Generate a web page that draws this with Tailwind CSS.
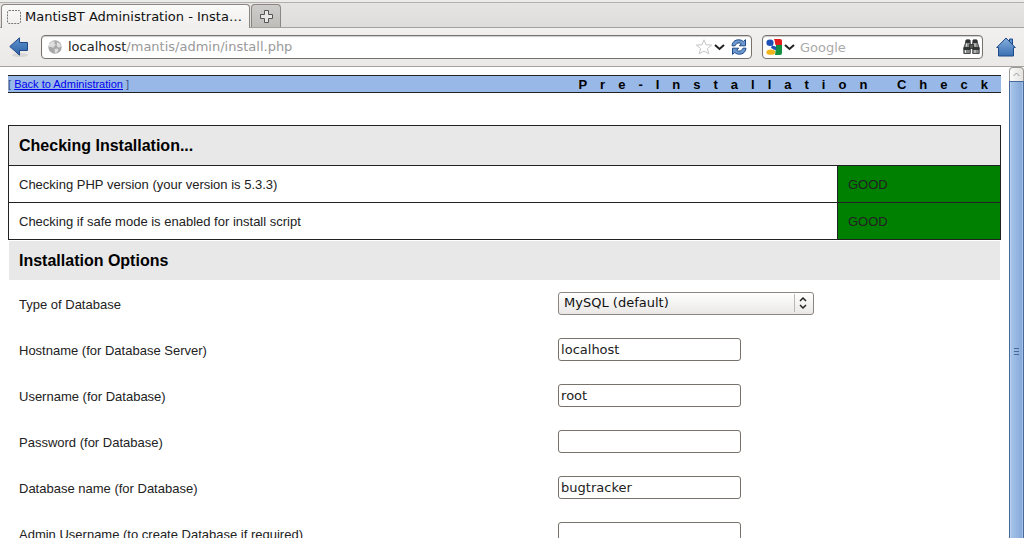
<!DOCTYPE html>
<html lang="en">
<head>
  <meta charset="UTF-8" />
  <meta name="viewport" content="width=device-width, initial-scale=1.0" />
  <title>MantisBT Administration - Installation</title>
  <script src="https://cdn.jsdelivr.net/npm/@tailwindcss/browser@4"></script>
</head>
<body class="flex h-screen flex-col overflow-hidden bg-white font-['DejaVu_Sans',sans-serif] text-[13px] text-[#222]">

  <!-- Tabs -->
  <div class="flex h-7 shrink-0 items-end gap-px border-b border-[#a5a19c] bg-linear-to-b from-[#e6e5e3] to-[#dedddb] pl-px shadow-[inset_0_2px_0_#ebebea,inset_0_3px_0_#b3b0ac]">
    <div class="relative -mb-px flex h-6 w-[249px] items-center gap-1 rounded-t border border-b-0 border-[#8b8681] bg-linear-to-b from-[#fafaf9] to-[#efeeed] pl-[5px] text-[#111]">
      <svg class="h-[14px] w-[14px]" viewBox="0 0 14 14" fill="none" stroke="#777" stroke-dasharray="2 1">
        <rect x=".5" y=".5" width="13" height="13" rx="1.5" />
      </svg>
      <span class="whitespace-nowrap">MantisBT Administration - Insta…</span>
    </div>
    <button class="flex h-[23px] w-[30px] items-center justify-center rounded-t border border-b-0 border-[#8b8681] bg-linear-to-b from-[#cfcdcb] to-[#bfbdba]" aria-label="New tab">
      <svg class="h-[13px] w-[13px]" viewBox="0 0 13 13" fill="#e7e6e4" stroke="#555">
        <path d="M4.5.5h4v4h4v4h-4v4h-4v-4h-4v-4h4z" />
      </svg>
    </button>
  </div>

  <!-- Toolbar -->
  <div class="flex h-[39px] shrink-0 items-center gap-[10px] border-b border-[#a5a19c] bg-linear-to-b from-[#f1f0ef] to-[#eae9e7] pr-2 pl-[9px]">
    <button class="mr-[2px]" aria-label="Back">
      <svg class="h-5 w-5" viewBox="0 0 20 20">
        <defs>
          <linearGradient id="blue" x1="0" y1="0" x2="0" y2="1"><stop offset="0" stop-color="#5f94d0" /><stop offset="1" stop-color="#2d62a5" /></linearGradient>
          <linearGradient id="roof" x1="0" y1="0" x2="0" y2="1"><stop offset="0" stop-color="#86aedd" /><stop offset="1" stop-color="#3a70b3" /></linearGradient>
        </defs>
        <ellipse cx="11" cy="18" rx="8" ry="2" fill="#d8d7d5" />
        <path d="M.8 9.5 10.5.8v4.700h8v8h-8v4.700z" fill="url(#blue)" stroke="#204a87" stroke-linejoin="round" />
      </svg>
    </button>
    <div class="flex h-6 flex-1 items-center rounded border border-[#77726c] bg-white pr-1 pl-[6px] shadow-[inset_0_1px_1px_#ccc]">
      <svg class="mr-[6px] h-[14px] w-[14px] shrink-0" viewBox="0 0 14 14">
        <circle cx="7" cy="7" r="6.700" fill="#a8a8a8" />
        <path d="M1 4 4 1.300l3 .5-.7 1.700L8 5 6 6.200 5.500 8 3 6.700 1 7zM9 2l3.300 1.700.6 3-2.300 1-2-2zM6.500 9l3-.5 1 1.500-1.500 2.600-2 .7z" fill="#dedede" />
      </svg>
      <div class="relative h-full flex-1">
        <input class="h-full w-full bg-transparent outline-none" aria-label="Address" value="" />
        <span class="pointer-events-none absolute inset-y-0 left-0 flex items-center text-[#999]"><span class="text-[#222]">localhost</span>/mantis/admin/install.php</span>
      </div>
      <button aria-label="Bookmark">
        <svg class="h-4 w-[18px]" viewBox="0 0 18 16" fill="#fff" stroke="#c4c4c4" stroke-linejoin="round">
          <path d="m9 .8 2.100 5 5.500.3-4.200 3.500 1.400 5.200L9 12l-4.800 2.800 1.400-5.200L1.400 6.100l5.500-.3z" />
        </svg>
      </button>
      <button class="ml-px" aria-label="History">
        <svg class="h-[7px] w-[11px]" viewBox="0 0 11 7" fill="none" stroke="#222" stroke-width="2"><path d="m1 1 4.500 4L10 1" /></svg>
      </button>
      <button class="ml-[6px]" aria-label="Reload">
        <svg class="h-4 w-4" viewBox="0 0 16 16" stroke="#204a87" stroke-linejoin="round" fill="#6c99cf">
          <path d="M1 6.800C1.300 3 4 .8 7.500.8c2 0 3.600.6 4.800 1.700L14.500.6v6.200H8.300l2-2C8.500 3.400 5.700 3.400 4 6.800z" />
          <path d="M15 9.200c-.3 3.800-3 6-6.500 6-2 0-3.600-.6-4.800-1.700l-2.200 1.900V9.200h6.200l-2 2c1.800 1.400 4.600 1.400 6.300-2z" />
        </svg>
      </button>
    </div>
    <div class="flex h-6 w-[221px] items-center rounded border border-[#77726c] bg-white pr-[2px] pl-[3px] shadow-[inset_0_1px_1px_#ccc]">
      <button class="flex items-center gap-[2px]" aria-label="Search engine">
        <svg class="h-4 w-4" viewBox="0 0 16 16">
          <path d="M8 0h6q2 0 2 2v4H9z" fill="#e31b1b" />
          <path d="M10 6h6v8q0 2-2 2H9z" fill="#129140" />
          <path d="M0 2q0-2 2-2h6l1.500 6-.5 10H2q-2 0-2-2z" fill="#fff" />
          <ellipse cx="4" cy="3.800" rx="3.600" ry="3.300" fill="#1d4fb5" />
          <path d="m6 6 4 2.500V11L5 9z" fill="#1d4fb5" />
          <ellipse cx="8.500" cy="9" rx="2" ry="1.800" fill="#1d4fb5" />
          <ellipse cx="4.800" cy="13.200" rx="4.400" ry="2.600" fill="#f3b51c" />
        </svg>
        <svg class="h-[7px] w-[11px]" viewBox="0 0 11 7" fill="none" stroke="#222" stroke-width="2"><path d="m1 1 4.500 4L10 1" /></svg>
      </button>
      <input class="ml-[5px] h-full min-w-0 flex-1 bg-transparent outline-none placeholder:text-[#aaa]" placeholder="Google" aria-label="Search" />
      <button aria-label="Find">
        <svg class="h-4 w-[17px]" viewBox="0 0 17 16" stroke="#2b2d2e" stroke-width=".8" fill="#888a85">
          <path d="M3.500 1h3l.8 3v10.500H.8V9zM13.500 1h-3l-.8 3v10.500h6.500V9z" />
          <path d="M6.500 5.500h4v4h-4z" fill="#555753" />
          <path d="M3 1h4v2.500H2.800zM10 1h4l.2 2.500H10zM1 8.500h6v2H1zM10 8.500h6v2h-6z" fill="#2e3436" />
          <path d="M2.500 11v3M3.500 4.500v3M12 11v3M12 4.500v3" stroke="#ddd" stroke-width="1" />
        </svg>
      </button>
    </div>
    <button class="ml-[3px]" aria-label="Home">
      <svg class="h-5 w-5" viewBox="0 0 20 20" stroke="#204a87" stroke-linejoin="round">
        <path d="M13.500 2h3v7h-3z" fill="#5f94d0" />
        <path d="M10 1 .7 10.500h1.800V19h15v-8.500h1.800z" fill="url(#roof)" />
      </svg>
    </button>
  </div>

  <div class="flex min-h-0 flex-1">
    <main class="flex-1 overflow-hidden p-2 font-['Liberation_Sans',sans-serif]">
      <div class="flex h-[18px] items-center justify-between border-y border-[#222] bg-[#98b8e8]">
        <span class="text-[11px] text-[#33508a]">[ <a class="text-[#00e] underline" href="#">Back to Administration</a> ]</span>
        <span class="pt-px text-[13px] leading-4 font-bold tracking-[1em] text-black">Pre-Installation Check</span>
      </div>

      <table class="mt-8 w-full border-collapse border border-[#222]">
        <thead>
          <tr class="h-10 bg-[#e8e8e8]">
            <th colspan="2" class="px-[10px] text-left text-base font-bold text-black">Checking Installation...</th>
          </tr>
        </thead>
        <tbody>
          <tr class="h-[37px] border-t border-[#222]">
            <td class="px-[10px] pt-[2px]">Checking PHP version (your version is 5.3.3)</td>
            <td class="w-[163px] border-l border-[#222] bg-[#008000] px-[10px] pt-[2px]">GOOD</td>
          </tr>
          <tr class="h-[37px] border-t border-[#222]">
            <td class="px-[10px] pt-[2px]">Checking if safe mode is enabled for install script</td>
            <td class="border-l border-[#222] bg-[#008000] px-[10px] pt-[2px]">GOOD</td>
          </tr>
        </tbody>
      </table>

      <form class="mx-px mt-px">
        <h2 class="flex h-[39px] items-center bg-[#e8e8e8] px-[10px] text-base font-bold text-black">Installation Options</h2>
        <div class="grid h-[46px] grid-cols-[54.4%_1fr] items-center">
          <label class="px-[10px] pt-1" for="db_type">Type of Database</label>
          <div class="px-[10px] pt-px">
            <div class="relative h-[23px] w-[256px]">
              <select id="db_type" class="block h-[23px] w-full appearance-none rounded-[3px] border border-[#8b8681] bg-linear-to-b from-white to-[#e9e8e6] pb-px pl-[5px] font-['DejaVu_Sans',sans-serif] text-[13px] text-[#111]">
                <option>MySQL (default)</option>
              </select>
              <svg class="pointer-events-none absolute top-[2px] right-[5px] h-[18px] w-[15px]" viewBox="0 0 15 18" fill="none">
                <path d="M.5 0v18" stroke="#bbb8b4" />
                <path d="m6 7 3-3 3 3M6 11l3 3 3-3" stroke="#222" stroke-width="1.500" />
              </svg>
            </div>
          </div>
        </div>
        <div class="grid h-[46px] grid-cols-[54.4%_1fr] items-center">
          <label class="px-[10px] pt-1" for="hostname">Hostname (for Database Server)</label>
          <div class="flex px-[10px] pt-px"><input id="hostname" class="h-[23px] w-[183px] rounded-[3px] border border-[#77726c] bg-white px-[2px] pb-px font-['DejaVu_Sans',sans-serif]" value="localhost" /></div>
        </div>
        <div class="grid h-[46px] grid-cols-[54.4%_1fr] items-center">
          <label class="px-[10px] pt-1" for="db_username">Username (for Database)</label>
          <div class="flex px-[10px] pt-px"><input id="db_username" class="h-[23px] w-[183px] rounded-[3px] border border-[#77726c] bg-white px-[2px] pb-px font-['DejaVu_Sans',sans-serif]" value="root" /></div>
        </div>
        <div class="grid h-[46px] grid-cols-[54.4%_1fr] items-center">
          <label class="px-[10px] pt-1" for="db_password">Password (for Database)</label>
          <div class="flex px-[10px] pt-px"><input type="password" id="db_password" class="h-[23px] w-[183px] rounded-[3px] border border-[#77726c] bg-white px-[2px] pb-px font-['DejaVu_Sans',sans-serif]" /></div>
        </div>
        <div class="grid h-[46px] grid-cols-[54.4%_1fr] items-center">
          <label class="px-[10px] pt-1" for="database_name">Database name (for Database)</label>
          <div class="flex px-[10px] pt-px"><input id="database_name" class="h-[23px] w-[183px] rounded-[3px] border border-[#77726c] bg-white px-[2px] pb-px font-['DejaVu_Sans',sans-serif]" value="bugtracker" /></div>
        </div>
        <div class="grid h-[46px] grid-cols-[54.4%_1fr] items-center">
          <label class="px-[10px] pt-1" for="admin_username">Admin Username (to create Database if required)</label>
          <div class="flex px-[10px] pt-px"><input id="admin_username" class="h-[23px] w-[183px] rounded-[3px] border border-[#77726c] bg-white px-[2px] pb-px font-['DejaVu_Sans',sans-serif]" /></div>
        </div>
      </form>
    </main>

    <!-- Scrollbar -->
    <div class="flex w-[15px] shrink-0 flex-col">
      <button class="flex h-[14px] shrink-0 items-center justify-center rounded-t border border-b-0 border-[#9b9792] bg-linear-to-r from-[#fafafa] to-[#e4e3e1]" aria-label="Scroll up">
        <svg class="h-[5px] w-[7px]" viewBox="0 0 7 5" fill="none" stroke="#999"><path d="m.5 4 3-3 3 3" /></svg>
      </button>
      <div class="flex flex-1 flex-col items-center border-x border-t border-[#49699a] bg-linear-to-r from-[#a9c6ea] to-[#84a7d8] pt-[266px] shadow-[inset_1px_0_0_#b8d0ef,inset_-1px_0_0_#a3c0e6]">
        <svg class="h-[7px] w-[5px]" viewBox="0 0 5 7" stroke="#49699a"><path d="M0 .5h5M0 3.500h5M0 6.500h5" /></svg>
      </div>
    </div>
  </div>
</body>
</html>
